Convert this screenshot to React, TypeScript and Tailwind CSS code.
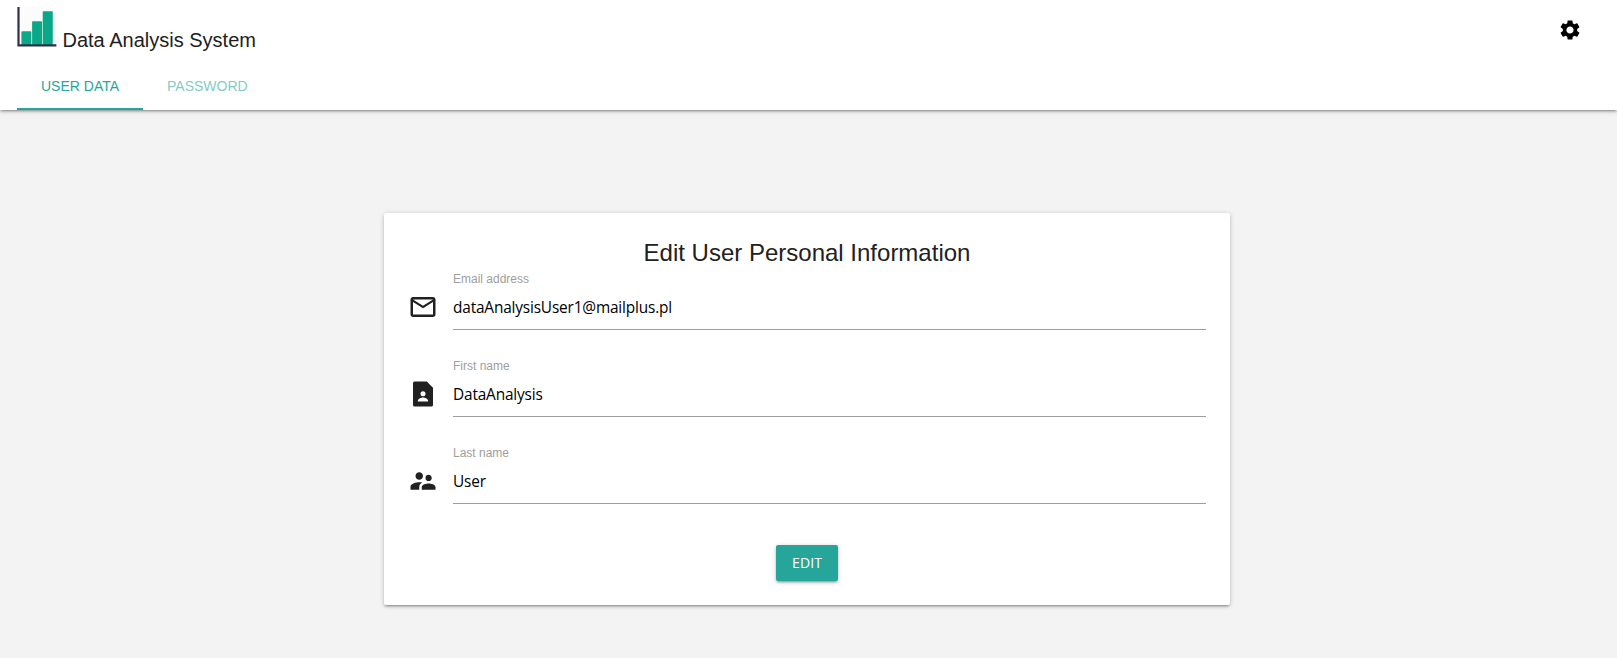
import type { ComponentType } from "react";
import { MdMailOutline, MdSettings, MdSupervisorAccount } from "react-icons/md";

function Logo() {
  return (
    <svg className="mt-[7px] h-10 w-10 shrink-0" viewBox="0 0 40 40">
      <path d="M2 0h37v38H2z" fill="#fcfcfc" />
      <g fill="#0ba888">
        <rect x="4.4" y="24.3" width="10" height="13.7" rx="0.8" />
        <rect x="15.1" y="14.3" width="10" height="23.7" rx="0.8" />
        <rect x="25.7" y="4.3" width="10.1" height="33.7" rx="0.8" />
      </g>
      <path d="M1.5 0v38.3H39.4" fill="none" stroke="#2d2f4b" strokeWidth="2.2" />
    </svg>
  );
}

function ContactPage({ className }: { className?: string }) {
  return (
    <svg className={className} viewBox="0 0 24 24" fill="currentColor">
      <path
        fillRule="evenodd"
        d="M15 2H5.2Q4 2 4 3.2v17.6Q4 22 5.2 22h13.6q1.2 0 1.2-1.2V7l-5-5zM12 9.8a2 2 0 1 1 0 4 2 2 0 0 1 0-4zM16.1 18H7.9v-.6c0-1.6 2.6-2.6 4.1-2.6s4.1 1 4.1 2.6v.6z"
      />
    </svg>
  );
}

function Field({ icon: Icon, label, value }: { icon: ComponentType<{ className?: string }>; label: string; value: string }) {
  return (
    <div className="flex h-[87px] items-start">
      <Icon className="mt-[21px] h-[30px] w-[30px] shrink-0 text-[#212121]" />
      <label className="ml-[15px] flex h-[59px] flex-1 flex-col border-b border-[#9e9e9e]">
        <span className="mt-px h-[14px] text-[12px] leading-[14px] text-[#9e9e9e]">{label}</span>
        <span className="mt-[11px] font-['Open_Sans','Noto_Sans',sans-serif] text-[15.4px] leading-[22px] tracking-[-0.17px] text-black">{value}</span>
      </label>
    </div>
  );
}

export default function App() {
  return (
    <div className="flex h-[658px] flex-col bg-[#f3f3f3] font-['Liberation_Sans',Arial,sans-serif] text-[#212121]">
      <header className="z-10 flex h-[110px] shrink-0 flex-col bg-white pl-[17px] shadow-[0_2px_2px_0_rgba(0,0,0,0.14),0_3px_1px_-2px_rgba(0,0,0,0.12),0_1px_5px_0_rgba(0,0,0,0.2)]">
        <div className="flex h-[62px] items-start justify-between">
          <div className="flex items-start">
            <Logo />
            <h1 className="ml-[5.5px] mt-[28px] text-[20px] leading-6">Data Analysis System</h1>
          </div>
          <button className="mr-[35px] mt-[18px]" aria-label="Settings">
            <MdSettings className="h-6 w-6 text-black" />
          </button>
        </div>
        <nav className="flex h-12 text-[14px] leading-[48px]">
          <a className="h-12 border-b-2 border-[#26a69a] px-6 text-[#26a69a]">USER DATA</a>
          <a className="h-12 px-6 text-[#26a69a]/60">PASSWORD</a>
        </nav>
      </header>
      <main className="flex justify-center pr-[3px] pt-[103px]">
        <section className="flex h-[392px] w-[846px] flex-col rounded-[2px] bg-white px-6 pt-6 shadow-[0_2px_2px_0_rgba(0,0,0,0.14),0_3px_1px_-2px_rgba(0,0,0,0.12),0_1px_5px_0_rgba(0,0,0,0.2)]">
          <h2 className="h-[34px] text-center text-[24px] leading-[32px]">Edit User Personal Information</h2>
          <Field icon={MdMailOutline} label="Email address" value="dataAnalysisUser1@mailplus.pl" />
          <Field icon={ContactPage} label="First name" value="DataAnalysis" />
          <Field icon={MdSupervisorAccount} label="Last name" value="User" />
          <button className="mt-[13px] h-9 w-[62px] shrink-0 self-center rounded-[2px] bg-[#26a69a] font-['Open_Sans','Noto_Sans',sans-serif] text-[14px] leading-9 tracking-[0.1px] text-white shadow-[0_2px_2px_0_rgba(0,0,0,0.14),0_3px_1px_-2px_rgba(0,0,0,0.12),0_1px_5px_0_rgba(0,0,0,0.2)]">
            EDIT
          </button>
        </section>
      </main>
    </div>
  );
}
